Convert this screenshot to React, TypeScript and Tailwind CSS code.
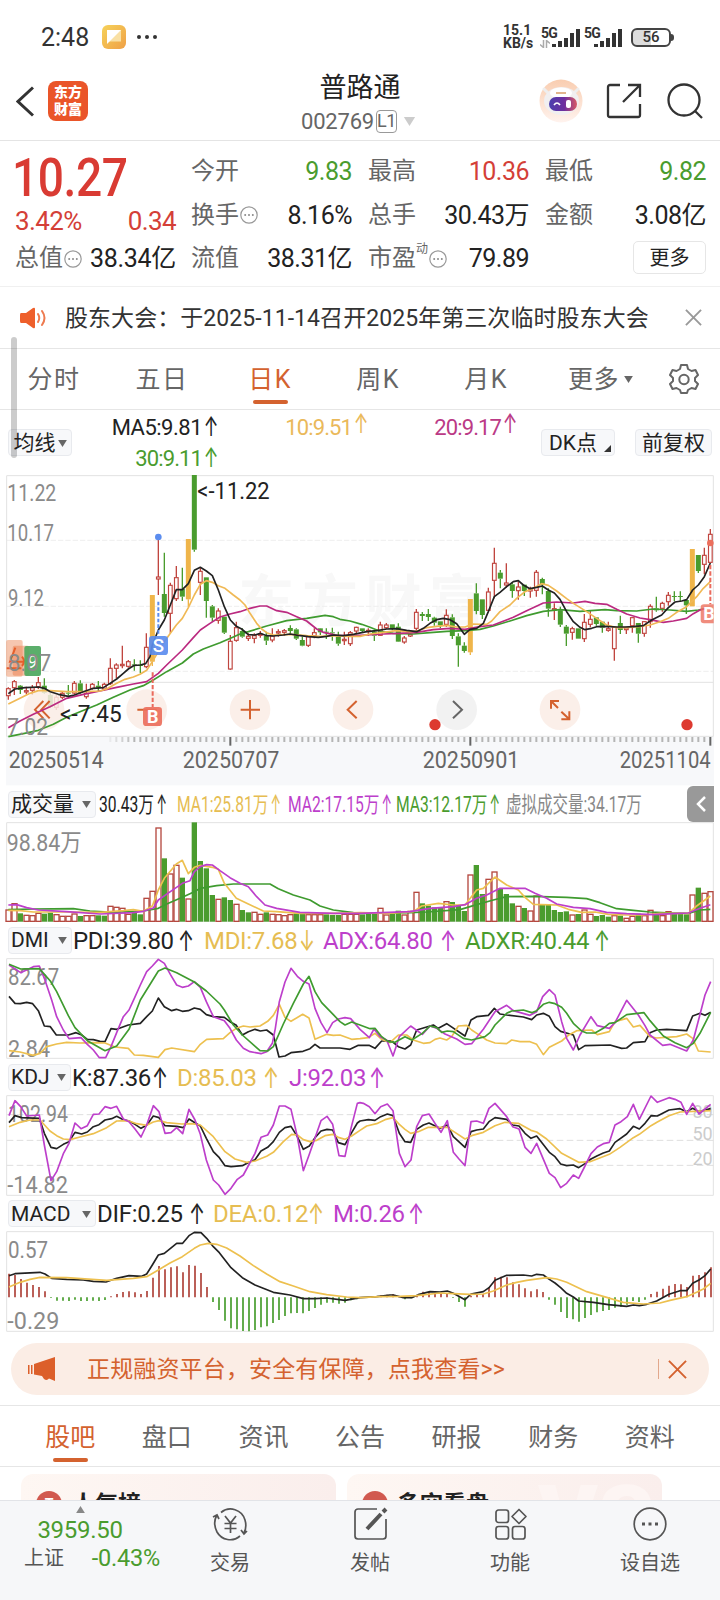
import React from 'react';
import clsx from 'clsx';

const RED = '#c0453f';
const GREEN = '#4a9c2e';
const YELLOW = '#efb54a';

// Charts are drawn on a grid of 3 units per pixel, one trading day every 18 units
const dayX = (i: number) => 25 + i * 18;

// Candles: kind, high, body top, body bottom, low
type Candle = [string, number, number, number, number];
const candles: Candle[] = [
    ['r', 667, 671, 692, 704], ['r', 645, 650, 668, 690], ['g', 660, 662, 675, 687], ['r', 665, 677, 681, 688],
    ['r', 660, 668, 676, 690], ['r', 636, 653, 665, 672], ['g', 640, 662, 684, 686], ['g', 684, 690, 726, 728],
    ['r', 690, 697, 727, 735], ['r', 680, 685, 697, 702], ['g', 660, 683, 686, 692], ['r', 648, 655, 684, 688],
    ['g', 646, 655, 684, 686], ['r', 656, 685, 695, 701], ['r', 654, 658, 670, 674], ['g', 648, 662, 668, 678],
    ['r', 653, 658, 672, 678], ['r', 580, 610, 656, 660], ['r', 595, 600, 610, 640], ['r', 542, 598, 602, 610],
    ['r', 585, 590, 604, 608], ['g', 583, 598, 601, 617], ['g', 586, 599, 603, 625], ['r', 505, 547, 605, 610],
    ['y', 390, 390, 590, 603], ['r', 216, 336, 342, 390], ['g', 263, 387, 444, 455], ['r', 353, 361, 445, 505],
    ['r', 303, 338, 401, 408], ['g', 308, 372, 395, 408], ['y', 222, 222, 403, 425], ['g', 30, 30, 254, 260],
    ['r', 308, 319, 352, 390], ['g', 337, 337, 408, 458], ['g', 420, 424, 458, 470], ['r', 430, 438, 466, 476],
    ['g', 455, 455, 503, 507], ['r', 510, 529, 612, 614], ['r', 470, 488, 526, 530], ['g', 490, 498, 515, 518],
    ['r', 505, 514, 520, 528], ['r', 505, 512, 520, 535], ['r', 498, 508, 511, 518], ['g', 500, 513, 527, 540],
    ['r', 490, 513, 525, 532], ['r', 493, 500, 504, 515], ['r', 492, 497, 502, 512], ['g', 481, 489, 498, 506],
    ['g', 490, 493, 521, 525], ['g', 515, 525, 542, 544], ['r', 512, 515, 541, 546], ['r', 490, 503, 512, 520],
    ['g', 489, 490, 502, 510], ['g', 490, 500, 503, 522], ['g', 488, 502, 505, 527], ['g', 500, 514, 536, 542],
    ['r', 500, 523, 527, 540], ['r', 498, 503, 536, 543], ['r', 485, 487, 498, 508], ['g', 490, 490, 498, 503],
    ['r', 490, 496, 500, 512], ['g', 495, 500, 512, 528], ['r', 470, 480, 511, 513], ['r', 474, 480, 488, 492],
    ['g', 478, 478, 492, 496], ['g', 475, 485, 530, 531], ['r', 513, 519, 531, 536], ['r', 495, 508, 513, 516],
    ['r', 432, 442, 490, 505], ['g', 441, 447, 453, 468], ['g', 432, 447, 456, 468], ['g', 455, 458, 473, 482],
    ['g', 469, 469, 481, 490], ['r', 433, 451, 478, 486], ['g', 448, 457, 513, 522], ['g', 505, 514, 541, 605],
    ['g', 532, 542, 558, 563], ['y', 402, 402, 562, 570], ['g', 355, 385, 438, 448], ['g', 403, 403, 450, 462],
    ['r', 368, 381, 436, 438], ['r', 248, 295, 346, 400], ['g', 315, 323, 341, 370], ['r', 295, 354, 360, 368],
    ['g', 352, 358, 378, 398], ['r', 350, 366, 377, 404], ['g', 359, 359, 378, 393], ['r', 365, 372, 378, 398],
    ['r', 315, 322, 376, 395], ['g', 338, 342, 360, 388], ['g', 370, 378, 431, 455], ['r', 415, 431, 435, 465],
    ['g', 425, 436, 479, 486], ['g', 480, 485, 506, 543], ['r', 485, 491, 502, 524], ['g', 490, 490, 521, 521],
    ['r', 447, 472, 521, 531], ['r', 435, 463, 478, 487], ['g', 457, 457, 477, 482], ['g', 470, 470, 488, 503],
    ['r', 470, 491, 496, 500], ['r', 484, 487, 551, 587], ['g', 452, 474, 495, 507], ['r', 488, 489, 494, 507],
    ['r', 456, 458, 482, 503], ['g', 474, 474, 506, 533], ['r', 468, 470, 505, 515], ['r', 418, 424, 470, 488],
    ['g', 395, 430, 436, 440], ['r', 410, 415, 430, 440], ['r', 381, 391, 410, 422], ['g', 379, 393, 396, 408],
    ['g', 379, 393, 396, 410], ['g', 403, 405, 421, 447], ['y', 252, 252, 424, 424], ['g', 270, 270, 318, 324],
    ['r', 248, 271, 298, 328], ['r', 192, 208, 292, 292],
];

const priceLines = [
    ['#3f9b2f', '25,815 70,806 115,796 160,778 200,757 240,740 290,720 340,697 390,675 430,662 460,645 500,620 547,594 580,567 610,552 660,533 700,516 720,507 745,500 800,483 860,467 920,460 975,451 1000,455 1020,463 1050,468 1085,478 1110,487 1140,499 1180,505 1240,507 1290,503 1340,499 1395,497 1440,493 1480,483 1530,468 1580,452 1630,439 1680,434 1740,439 1815,434 1850,437 1910,438 1960,432 2010,435 2060,439 2095,435 2131,428'],
    ['#bb2a80', '25,788 60,768 100,748 150,725 200,700 250,688 300,678 350,667 400,657 440,650 475,625 500,600 547,555 580,518 601,495 630,475 660,456 690,447 720,440 750,430 780,423 800,423 830,437 860,442 890,455 920,468 950,492 970,502 1010,511 1060,512 1100,510 1150,507 1200,505 1250,502 1300,494 1350,490 1395,493 1440,485 1480,480 1540,457 1580,437 1630,414 1670,411 1720,414 1755,409 1785,415 1820,418 1850,433 1880,447 1920,459 1950,464 1990,472 2020,468 2060,460 2080,446 2100,435 2131,428'],
    ['#f0b955', '25,717 60,700 90,685 115,677 150,677 200,680 250,680 300,678 320,672 350,655 375,643 400,636 420,628 440,616 457,590 475,560 493,530 511,505 529,480 547,460 565,428 583,390 601,358 619,347 637,352 655,362 675,370 700,390 720,405 735,420 750,445 770,475 785,492 800,503 820,510 870,508 920,512 960,514 1010,512 1040,514 1080,514 1110,507 1150,502 1190,497 1230,500 1250,498 1280,488 1310,484 1340,481 1370,486 1395,486 1420,477 1440,478 1460,478 1475,468 1500,440 1530,420 1550,400 1575,380 1600,370 1625,356 1645,361 1670,378 1700,401 1720,415 1760,440 1790,460 1820,480 1850,488 1880,488 1920,484 1950,480 1980,470 2005,460 2030,442 2060,425 2090,395 2110,370 2131,350'],
    ['#222', '25,686 45,672 75,668 115,666 133,670 151,680 175,688 205,694 223,690 250,680 280,670 310,668 330,655 350,642 370,625 385,612 403,601 421,600 437,596 450,575 457,540 475,495 493,465 511,420 529,374 547,374 565,356 583,316 601,307 619,318 637,332 655,375 673,425 691,465 709,484 725,492 745,509 765,510 781,505 800,512 820,513 850,510 870,507 895,511 925,515 955,517 980,514 1000,510 1030,512 1060,508 1100,500 1130,497 1160,492 1190,491 1220,496 1250,500 1270,490 1290,475 1310,464 1330,460 1350,464 1370,476 1380,490 1393,508 1410,493 1430,490 1450,475 1465,440 1483,395 1500,382 1520,365 1540,350 1555,347 1570,360 1590,371 1610,367 1627,363 1645,375 1663,384 1680,403 1700,440 1720,470 1740,487 1755,494 1775,490 1790,485 1815,484 1850,486 1875,486 1900,485 1930,482 1955,465 1985,450 2005,428 2025,411 2045,408 2060,404 2078,375 2095,360 2113,335 2131,294'],
];

const volumes =
    'r388 r369 g400 r404 r405 r398 g401 g398 r402 r407 r407 r400 g408 r405 r405 g406 g407 r377 r380 r383 r401 g398 g403 r353 r332 r142 g235 r280 r254 g293 r355 g127 g243 g265 g345 r356 g352 g360 r371 g390 g397 r395 r401 g397 r401 r402 r405 r402 g400 g398 r402 r402 r402 g403 g405 g405 r401 r401 r401 g403 g402 g402 r383 r403 g402 g392 r403 r392 r335 g370 g377 g382 g381 r363 g366 g375 g393 r283 g255 g342 r296 r274 g327 g342 g370 r377 g384 r391 r346 g375 g374 g390 g396 g394 r403 g402 r388 r401 g408 g405 g410 r405 g407 r413 r407 g401 r405 r389 g403 r405 r393 g400 g402 g403 r343 g323 r338 r333'.split(' ');

const volumeLines = [
    ['#3f9b2f', '25,389 100,387 220,386 270,393 340,397 430,393 475,385 500,372 547,352 583,335 601,325 650,317 700,312 810,312 835,326 880,345 930,360 960,378 1000,390 1060,398 1160,399 1230,398 1280,396 1380,389 1430,374 1480,360 1520,350 1600,349 1700,352 1760,356 1800,368 1850,386 1900,391 1950,396 2020,399 2065,400 2100,390 2131,388'],
    ['#edc04f', '25,391 60,392 100,396 200,396 300,397 340,394 370,392 400,389 430,394 457,378 475,330 493,295 529,252 547,241 565,281 583,262 601,256 637,262 655,268 673,310 709,355 745,372 790,393 830,395 900,400 1000,400 1080,398 1160,400 1240,395 1265,378 1315,370 1360,375 1395,375 1430,330 1450,325 1485,291 1520,315 1555,330 1575,352 1600,373 1670,375 1705,388 1745,397 1785,396 1825,403 1880,405 1930,405 1980,400 2030,400 2065,400 2090,378 2131,348'],
    ['#bd3fcb', '25,375 50,374 80,383 115,390 200,395 300,402 400,398 430,394 460,384 475,360 511,335 547,310 570,302 583,275 601,260 620,254 637,255 660,272 690,293 720,310 745,320 770,350 795,375 830,385 900,397 1000,400 1080,400 1230,395 1290,385 1360,380 1395,374 1430,355 1460,345 1500,325 1575,325 1605,340 1640,355 1670,372 1720,382 1770,386 1820,397 1880,401 1960,404 2020,401 2065,399 2100,385 2131,374'],
];

// The right half of a series is stored relative to the middle of the chart
const join = (left: string, right: string) =>
    left + ' ' + right.split(' ').map((p) => {
        const [x, y] = p.split(',').map(Number);
        return `${x + 1080},${y}`;
    }).join(' ');

const dmiLines = [
    ['#222', join(
        '27,649 45,670 61,671 80,667 98,671 115,692 133,738 151,740 169,765 205,765 228,758 245,765 262,778 280,779 300,784 315,785 333,746 350,748 385,735 421,730 440,710 457,693 475,654 493,680 515,692 529,688 547,694 565,692 583,684 601,688 619,704 640,710 673,712 690,725 709,736 727,765 745,755 765,748 781,753 800,750 820,765 837,831 855,828 873,818 909,814 930,806 945,793 960,804 1020,804 1050,808 1075,796',
        '0,796 27,796 45,805 65,783 95,783 115,800 135,807 152,795 170,750 220,735 235,745 260,731 315,768 333,720 350,710 385,706 403,685 420,702 440,705 490,711 515,719 530,705 550,700 568,709 585,740 602,754 640,765 656,809 675,797 750,795 785,805 800,804 820,788 855,785 870,758 890,750 920,748 980,752 998,708 1020,700 1035,706 1052,697')],
    ['#edc04f', join(
        '27,812 60,816 100,826 120,820 140,800 170,792 200,787 240,789 280,788 315,789 345,801 385,805 403,825 430,826 475,832 495,809 515,804 583,815 601,793 620,778 670,776 690,758 709,745 730,738 750,741 780,738 803,724 820,706 838,673 855,712 873,724 908,703 927,714 945,778 980,763 1000,766 1020,765 1055,778',
        '0,776 25,773 45,760 65,778 90,788 115,765 140,765 160,780 190,790 210,788 225,778 240,774 260,780 275,770 295,738 320,736 335,750 355,763 380,780 405,789 440,791 455,780 480,785 510,785 530,793 550,824 568,802 605,783 625,766 650,752 695,750 712,764 748,755 765,725 800,715 820,741 840,736 870,770 890,774 950,770 980,762 998,775 1015,813 1052,816')],
    ['#bd3fcb', join(
        '27,555 62,578 100,560 118,558 133,595 155,660 170,710 190,750 207,776 243,773 262,793 280,810 298,833 317,833 333,800 350,758 370,710 387,690 403,655 421,615 440,575 457,558 475,538 493,550 511,583 530,615 547,622 565,618 583,605 601,622 619,665 640,710 673,722 690,745 709,780 730,805 750,815 783,821 800,815 817,790 826,745 838,665 855,606 873,565 892,589 910,604 927,612 945,685 963,728 981,758 998,728 1015,717 1035,713 1052,716',
        '0,748 28,773 42,747 60,770 80,780 99,828 118,770 152,738 187,763 210,738 230,745 255,762 290,777 315,793 335,791 370,748 405,695 440,676 460,692 510,706 530,695 548,650 568,629 585,645 605,725 620,775 640,810 660,765 693,710 712,737 748,745 765,728 800,661 835,705 855,737 870,765 908,796 930,793 980,813 1000,780 1017,715 1035,645 1052,605')],
    ['#3f9b2f', join(
        '27,553 62,567 118,566 151,603 170,635 205,707 225,743 262,782 315,812 350,798 387,748 421,660 475,573 495,564 530,578 583,606 619,633 660,672 673,690 700,735 727,765 780,812 803,813 820,800 850,732 880,670 910,612 927,589 945,635 965,668 1000,704 1020,725 1035,735 1055,726',
        '0,735 30,746 45,745 65,770 85,785 105,787 135,770 155,780 187,760 210,738 230,743 245,757 262,753 280,755 310,775 335,780 375,770 390,758 405,735 440,700 455,693 490,690 515,698 530,692 550,673 568,667 585,671 605,682 620,700 640,730 665,753 680,759 705,759 730,745 748,730 765,728 800,704 852,698 870,722 890,745 910,768 945,788 980,803 1000,790 1020,760 1052,697')],
];

const kdjLines = [
    ['#222', join(
        '27,173 45,152 65,158 118,160 133,205 153,247 170,251 190,238 207,230 225,202 245,207 262,201 280,185 297,179 315,165 335,161 350,154 370,164 387,168 405,178 423,190 440,181 460,153 477,158 495,182 530,184 550,188 567,162 585,173 601,183 619,220 640,260 658,278 675,302 693,305 727,302 750,290 765,284 783,258 803,247 820,230 838,202 855,188 873,184 892,215 910,253 928,243 945,218 963,198 981,193 998,195 1015,233 1035,239 1055,203 1072,174',
        '0,168 25,164 45,166 62,155 82,147 99,152 118,205 135,230 152,232 170,193 190,180 207,174 240,190 262,180 280,215 315,247 333,200 350,195 370,192 387,170 405,158 440,163 458,180 477,183 495,205 513,220 530,213 568,262 585,275 602,297 620,302 640,300 656,308 675,296 693,282 712,272 730,264 748,258 765,232 800,207 820,184 838,192 855,175 873,152 892,153 927,135 960,131 980,140 998,130 1017,140 1052,131')],
    ['#edc04f', join(
        '27,185 60,172 90,165 120,165 150,198 170,212 190,222 210,224 240,216 280,206 320,188 350,168 385,167 410,176 440,181 460,171 477,167 500,173 545,177 575,176 601,180 640,215 675,260 705,282 740,292 765,288 800,274 820,262 850,230 875,208 892,210 910,224 930,230 950,226 975,212 998,208 1015,217 1035,223 1055,213',
        '0,196 20,183 50,176 75,164 99,158 118,178 135,193 152,205 175,200 205,187 240,187 262,187 285,202 315,222 335,212 370,202 405,182 435,172 475,175 513,196 530,201 560,222 605,265 656,292 690,290 748,268 780,247 820,218 838,208 873,182 892,171 927,152 960,141 1052,137')],
    ['#bd3fcb', join(
        '27,152 45,107 62,125 80,153 118,150 133,240 153,347 170,320 190,266 207,235 225,174 243,191 262,182 280,148 297,147 315,125 333,130 350,124 370,162 387,170 405,192 423,216 440,180 460,122 477,140 495,205 513,203 530,188 548,206 567,133 585,165 601,208 619,285 640,345 656,360 675,388 693,370 712,343 730,330 765,265 783,217 803,210 820,180 838,123 855,123 873,133 892,215 910,317 928,268 963,167 981,154 998,178 1017,272 1035,274 1053,190 1072,115',
        '0,113 10,115 28,125 45,146 62,125 82,117 99,137 118,265 135,305 153,285 170,185 187,152 207,147 225,175 243,202 262,167 280,262 297,282 315,302 333,170 350,168 370,175 387,130 405,115 440,155 458,185 477,192 495,247 513,265 530,235 568,325 585,338 602,368 620,355 640,330 656,340 675,303 693,266 712,246 730,236 748,232 765,180 783,170 802,155 820,118 838,163 873,93 892,112 927,98 945,103 963,112 980,148 998,115 1017,147 1052,118')],
];

const macdLines = [
    ['#222', join(
        '27,632 45,626 120,622 135,627 155,640 200,643 250,645 280,649 318,651 350,640 387,632 425,634 440,627 457,600 475,570 493,565 530,535 548,535 567,512 583,502 603,503 620,520 640,545 658,563 693,608 727,638 765,660 820,682 870,690 910,701 945,701 980,699 1035,706',
        '0,698 50,695 90,690 100,690 130,698 155,698 175,689 210,680 240,681 262,678 280,685 315,704 333,687 370,680 387,668 405,646 440,631 490,630 515,633 530,628 550,630 568,643 585,654 602,668 620,685 640,696 656,708 700,712 745,719 800,724 820,720 838,722 860,718 890,708 927,688 960,677 980,677 998,655 1017,645 1035,632 1052,612')],
    ['#edc04f', join(
        '27,666 60,652 90,643 120,637 200,638 320,646 400,640 440,635 475,615 510,594 547,575 583,550 601,540 625,535 650,538 680,549 720,573 760,602 800,627 840,650 880,663 930,680 980,689 1040,696',
        '0,698 60,695 120,694 170,692 240,684 280,686 330,688 370,687 400,678 440,660 470,652 500,646 560,638 590,642 620,652 680,680 740,697 790,712 850,717 900,714 930,706 980,695 1010,682 1030,672 1052,655')],
];

const macdBars = [
    626, 630, 642, 653, 660, 666, 679, 699, 707, 707, 708, 704, 708, 708, 707, 708, 705, 694, 687, 681, 679, 682, 687, 678,
    638, 603, 613, 607, 604, 622, 600, 602, 624, 666, 711, 735, 767, 790, 793, 798, 799, 795, 787, 784, 774, 765, 753, 745,
    744, 745, 738, 729, 719, 713, 713, 716, 713, 706, 703, 699, 695, 695, 691, 689, 688, 695, 703, 700, 690, 680, 681, 683,
    687, 685, 699, 711, 725, 692, 686, 687, 668, 637, 635, 637, 652, 658, 670, 679, 673, 681, 704, 719, 741, 759, 763, 770,
    759, 750, 742, 738, 735, 728, 725, 719, 708, 711, 704, 687, 680, 671, 662, 657, 658, 666, 632, 630, 622, 607,
];

const Lines: React.FC<{ lines: string[][] }> = ({ lines }) => (
    <g fill="none" strokeWidth="5" strokeLinejoin="round">
        {lines.map(([color, points]) => <polyline key={color} points={points} stroke={color} />)}
    </g>
);

const AxisText: React.FC<{ x: number; y: number; w: number; fill?: string; children: React.ReactNode }> = ({ x, y, w, fill = '#8a8a8a', children }) => (
    <text x={x} y={y} textLength={w} lengthAdjust="spacingAndGlyphs" fontSize="70" fill={fill}>{children}</text>
);

const Arrow: React.FC<{ down?: boolean }> = ({ down }) => (
    <span className="inline-flex w-[13px] shrink-0 justify-center font-['Inter'] tracking-normal">
        <span className="scale-x-[0.8] scale-y-[1.2]">{down ? '↓' : '↑'}</span>
    </span>
);

const Caret: React.FC<{ className?: string }> = ({ className }) => (
    <svg viewBox="0 0 10 8" className={clsx('h-[7px] w-[9px] fill-[#666]', className)}><path d="M0 0h10L5 8z" /></svg>
);

const MoreDots: React.FC = () => (
    <svg viewBox="0 0 18 18" className="ml-px h-[18px] w-[18px] shrink-0">
        <circle cx="9" cy="9" r="8.2" fill="none" stroke="#999" strokeWidth="1.2" />
        <circle cx="5.2" cy="9" r="1" fill="#888" /><circle cx="9" cy="9" r="1" fill="#888" /><circle cx="12.8" cy="9" r="1" fill="#888" />
    </svg>
);

const StatusBar: React.FC = () => (
    <div className="flex h-[62px] items-center pt-3 pl-[41px] text-[#333]">
        <span className="w-[61px] text-[25px] leading-none">2:48</span>
        <svg viewBox="0 0 24 24" className="h-6 w-6">
            <defs>
                <linearGradient id="note" x1="0" y1="0" x2="1" y2="1"><stop stopColor="#f6d25a" /><stop offset="1" stopColor="#efa046" /></linearGradient>
            </defs>
            <rect width="24" height="24" rx="6" fill="url(#note)" />
            <path d="M5 16.500V5h14v11.500z" fill="#f9e0a4" /><path d="M5 5h14L5 19z" fill="#fff" />
        </svg>
        <svg viewBox="0 0 22 6" className="ml-2.5 h-1.5 w-[22px] fill-[#333]"><circle cx="3" cy="3" r="2" /><circle cx="11" cy="3" r="2" /><circle cx="19" cy="3" r="2" /></svg>
        <div className="ml-[345px] w-[38px] text-[14px] leading-[13px] font-bold">
            <div>15.1</div>
            <div>KB/s</div>
        </div>
        <div className="relative flex h-[21px] w-[43px]">
            <span className="w-[11px] text-[14px] leading-[12px] font-bold tracking-[-0.8px]">5G</span>
            <svg viewBox="0 0 28 20" className="mt-px h-5 w-7 shrink-0 fill-[#333]">
                <path d="M0 16h4v3H0zM6 13h4v6H6zM12 10h4v9h-4zM18 5h4v14h-4zM24 1h4v18h-4z" />
            </svg>
            {/* Data traffic arrows */}
            <svg viewBox="0 0 10 8" className="absolute bottom-0 -left-px h-2 w-2.5" fill="none" stroke="#aaa" strokeWidth="1.500"><path d="M3.500 0v7.500L0 4.500M6.500 8V.5L10 3.500" /></svg>
        </div>
        <div className="flex h-[21px] w-[40px]">
            <span className="w-[10px] text-[14px] leading-[12px] font-bold tracking-[-0.8px]">5G</span>
            <svg viewBox="0 0 28 20" className="mt-px h-5 w-7 shrink-0 fill-[#333]">
                <path d="M0 16h4v3H0zM6 13h4v6H6zM12 10h4v9h-4zM18 5h4v14h-4zM24 1h4v18h-4z" />
            </svg>
        </div>
        <div className="relative ml-[7px] flex h-[19px] w-10 items-center justify-center rounded-[6px] border-2 border-[#444] bg-linear-to-r from-[#ddd] from-50% to-white to-50% text-[15px] leading-none font-medium">
            56
            <span className="absolute top-1 -right-[5px] h-[7px] w-[3px] rounded-r bg-[#444]" />
        </div>
    </div>
);

const Header: React.FC = () => (
    <div className="flex h-[79px] items-center border-b border-[#e4e4e4] pl-4">
        <svg viewBox="0 0 18 30" className="h-[31px] w-[18px]" fill="none" stroke="#333" strokeWidth="3"><path d="M17 1 2 15l15 14" /></svg>
        <div className="ml-[14px] flex h-10 w-10 flex-col items-center justify-center rounded-lg bg-[#ea5529] text-[14px] leading-[17px] font-black text-white">
            <span>东方</span>
            <span>财富</span>
        </div>
        <div className="ml-[205px] flex w-[134px] flex-col items-center pt-[6px]">
            <h1 className="text-[27px] leading-[34px] text-[#222]">普路通</h1>
            <div className="flex h-[32px] w-full items-center pl-[8px] text-[22px] text-[#666]">
                <span className="w-[74px] tracking-[-0.2px]">002769</span>
                <span className="ml-px flex h-[23px] w-[21px] items-center justify-center rounded-[4px] border border-[#999] text-[18px] leading-none tracking-[-0.5px]">L1</span>
                <Caret className="ml-[6px] h-[9px] w-[13px] fill-[#ccc]" />
            </div>
        </div>
        <svg viewBox="0 0 44 44" className="ml-[112px] h-11 w-11">
            <defs>
                <linearGradient id="face" x1="0" x2="1"><stop stopColor="#4b3fae" /><stop offset=".55" stopColor="#6f2f9e" /><stop offset="1" stopColor="#d95a62" /></linearGradient>
                <linearGradient id="halo" x1="0" x2="0" y1="0" y2="1"><stop stopColor="#f9cdb0" /><stop offset="1" stopColor="#fff3ee" /></linearGradient>
            </defs>
            <circle cx="22" cy="22" r="21.500" fill="url(#halo)" />
            <path d="M5 10l5 5M39 10l-5 5" stroke="#eee" strokeWidth="3" strokeLinecap="round" />
            <ellipse cx="22.500" cy="22" rx="17.500" ry="14" fill="#f1eff0" />
            <ellipse cx="22" cy="14" rx="11" ry="5.500" fill="#fff" />
            <path d="M17 14h10" stroke="#e2b58d" strokeWidth="2" />
            <rect x="10" y="18" width="28" height="14" rx="7" fill="url(#face)" />
            <path d="M15 26q3-4 6 0" fill="none" stroke="#fff" strokeWidth="1.600" />
            <rect x="27" y="21" width="5" height="8" rx="2" fill="#fff" />
        </svg>
        <svg viewBox="0 0 36 36" className="ml-[23px] h-9 w-9" fill="none" stroke="#333" strokeWidth="2.300">
            <path d="M14 2H4a2 2 0 0 0-2 2v28a2 2 0 0 0 2 2h28a2 2 0 0 0 2-2V21M22 2h12v12M34 2 17 19" />
        </svg>
        <svg viewBox="0 0 36 36" className="ml-[25px] h-9 w-9" fill="none" stroke="#333" strokeWidth="2.300">
            <circle cx="17" cy="17" r="15.500" /><path d="m28 28 7 7" />
        </svg>
    </div>
);

const quoteRows = [
    [{ label: '今开', value: '9.83', color: 'text-[#4a9c2e]' }, { label: '最高', value: '10.36', color: 'text-[#d43f38]' }, { label: '最低', value: '9.82', color: 'text-[#4a9c2e]' }],
    [{ label: '换手', value: '8.16%', dots: true }, { label: '总手', value: '30.43万' }, { label: '金额', value: '3.08亿' }],
    [{ label: '流值', value: '38.31亿' }, { label: '市盈', value: '79.89', dots: true, sup: '动' }],
];

const Quote: React.FC = () => (
    <div className="flex h-[146px] gap-[15px] border-b border-[#f0f0f0] pt-[9px] pl-[15px] text-[25px] leading-[43px] text-[#222]">
        <div className="w-[161px]">
            <div className="-ml-[3px] h-[50px] w-fit origin-left scale-x-[0.87] pt-[3px] text-[53px] leading-[50px] font-medium tracking-[-0.5px] text-[#d93b33]">10.27</div>
            <div className="flex h-[36px] items-end justify-between text-[26px] leading-[30px] tracking-[-0.6px] text-[#d43f38]"><span>3.42%</span><span>0.34</span></div>
            <div className="flex h-[45px] items-center justify-between text-[25px] tracking-[-0.3px]">
                <span className="flex items-center text-[24px] tracking-normal text-[#666]">总值<MoreDots /></span>
                <span>38.34亿</span>
            </div>
        </div>
        <div className="flex flex-col">
            {quoteRows.map((row, i) => (
                <div key={i} className="flex h-[43.5px] gap-[16px]">
                    {row.map((cell: any) => (
                        <div key={cell.label} className="flex w-[161px] items-center justify-between tracking-[-0.5px]">
                            <span className="flex items-center text-[24px] tracking-normal text-[#666]">
                                {cell.label}
                                {cell.sup && <span className="-mt-5 text-[12px] leading-none">{cell.sup}</span>}
                                {cell.dots && <MoreDots />}
                            </span>
                            <span className={cell.color}>{cell.value}</span>
                        </div>
                    ))}
                    {i === 2 && (
                        <button className="mt-1 ml-[72px] h-[33px] w-[73px] translate-x-4 rounded-[5px] border border-[#e6e6e6] text-[20px] leading-none">更多</button>
                    )}
                </div>
            ))}
        </div>
    </div>
);

const Notice: React.FC = () => (
    <div className="flex h-[62px] items-center border-b border-[#e6e6e6] pl-5 text-[23px] text-[#333]">
        <svg viewBox="0 0 26 22" className="h-[22px] w-[26px]">
            <path d="M1 6h5l7-5q2-1 2 1v18q0 2-2 1l-7-5H1q-1 0-1-2V8q0-2 1-2z" fill="#ee5f2b" />
            <path d="M18 7q2.500 4 0 8M22 4q5 7 0 14" fill="none" stroke="#ee7a4f" strokeWidth="2" strokeLinecap="round" />
        </svg>
        <span className="ml-[19px] w-[600px] pt-[3px] tracking-[0.06px] whitespace-nowrap">股东大会：于2025-11-14召开2025年第三次临时股东大会</span>
        <svg viewBox="0 0 18 18" className="ml-5 h-[17px] w-[17px]" fill="none" stroke="#999" strokeWidth="2"><path d="m1 1 16 16M17 1 1 17" /></svg>
    </div>
);

const PeriodTabs: React.FC = () => (
    <div className="flex h-[61px] items-center border-b border-[#e6e6e6] text-[25px] text-[#666]">
        {['分时', '五日', '日K', '周K', '月K'].map((tab) => (
            <div key={tab} className={clsx('flex h-full w-[108px] flex-col items-center pt-[10px]', tab === '日K' && 'text-[#d4622f]')}>
                <span className="leading-[41px] tracking-[1.500px]">{tab}</span>
                {tab === '日K' && <span className="h-1 w-[35px] rounded-full bg-[#d4622f]" />}
            </div>
        ))}
        <span className="ml-7 w-[52px] pt-[2px] leading-[38px] tracking-[0.5px]">更多</span>
        <Caret className="ml-1" />
        <svg viewBox="0 0 30 30" className="ml-9 h-[30px] w-[30px]" fill="none" stroke="#666" strokeWidth="2" strokeLinejoin="round">
            <path d="M12 1h6l1 4 3.500 2 4-1 2.500 5-3 3v3l3 3-2.500 5-4-1-3.500 2-1 3h-6l-1-3-3.500-2-4 1L1 20l3-3v-3l-3-3 2.500-5 4 1L11 5z" />
            <circle cx="15" cy="15.500" r="4.700" />
        </svg>
    </div>
);

const chip = 'flex h-[27px] items-center rounded-[4px] border border-[#e8eaee] bg-[#f7f8fa] pt-px text-[21px] leading-none text-[#222]';

const MaRow: React.FC = () => (
    <div className="flex h-[65px] items-center pl-2 text-[22px]">
        <div className={clsx(chip, 'w-16 justify-center text-[20px]')}>均线<Caret className="ml-0.5" /></div>
        <div className="h-full w-[146px] pt-[2px] leading-[31px]">
            <div className="flex justify-end gap-[3px] tracking-[-0.5px] text-[#222]">MA5:9.81<Arrow /></div>
            <div className="flex justify-end gap-[3px] tracking-[-0.9px] text-[#4a9c2e]">30:9.11<Arrow /></div>
        </div>
        <div className="flex h-full w-[150px] justify-end gap-[3px] pt-[2px] leading-[31px] tracking-[-0.9px] text-[#eab95a]">10:9.51<Arrow /></div>
        <div className="flex h-full w-[149px] justify-end gap-[3px] pt-[2px] leading-[31px] tracking-[-0.9px] text-[#bb3a86]">20:9.17<Arrow /></div>
        <div className={clsx(chip, 'relative ml-6 w-[74px] pl-[7px]')}>
            DK点
            <svg viewBox="0 0 7 7" className="absolute right-[3px] bottom-[3px] h-[7px] w-[7px] fill-[#333]"><path d="M7 0v7H0z" /></svg>
        </div>
        <div className={clsx(chip, 'ml-5 w-[77px] justify-center text-[20.500px]')}>前复权</div>
    </div>
);

const Frame: React.FC<{ top: number; bottom: number }> = ({ top, bottom }) => (
    <path d={`M20 ${top + 2}H2140V${bottom - 2}H20z`} fill="none" stroke="#e2e2e2" strokeWidth="3" />
);

const PriceChart: React.FC = () => (
    <svg viewBox="0 30 2160 933" className="block h-[311px] w-[720px]">
        <rect x="18" y="813" width="2124" height="148" fill="#f7f8fa" />
        <text x="715" y="467" textLength="740" fontSize="168" fontWeight="700" fill="#f8f8f8">东方财富</text>
        <path d="M20 226H2140M20 424H2140M20 619H2140" stroke="#eee" strokeWidth="3" strokeDasharray="16 6" />
        <path d="M20 652H2140" stroke="#e2e2e2" strokeWidth="3" />
        <Frame top={30} bottom={816} />

        {/* Candlesticks */}
        {candles.map(([kind, high, top, bottom, low], i) => {
            const color = kind === 'r' ? RED : kind === 'g' ? GREEN : YELLOW;
            return (
                <g key={i} stroke={color} strokeWidth="4">
                    <path d={`M${dayX(i)} ${high}V${top}M${dayX(i)} ${bottom}V${low}`} />
                    {kind === 'r'
                        ? <rect x={dayX(i) - 5.5} y={top} width="11" height={bottom - top} fill="#fff" strokeWidth="3.5" />
                        : <rect x={dayX(i) - 7.5} y={top} width="15" height={bottom - top} fill={color} stroke="none" />}
                </g>
            );
        })}

        {/* Toolbar */}
        <g fill="#faece5" fillOpacity="0.85">
            <circle cx="132" cy="734" r="61" /><circle cx="440" cy="734" r="61" /><circle cx="750" cy="734" r="61" />
            <circle cx="1059" cy="734" r="61" /><circle cx="1370" cy="734" r="61" fill="#f0f0f0" /><circle cx="1680" cy="734" r="61" />
        </g>
        <g fill="none" stroke="#d4622f" strokeWidth="6">
            <path d="M130 708l-25 26 25 26M149 708l-25 26 25 26M412 734h58M722 734h58M750 705v58M1070 708l-27 26 27 26" />
            <path d="M1359 708l27 26-27 26" stroke="#666" />
            <path d="M1653 731v-23h24M1653 708l21 21M1708 739v24h-24M1708 763l-24-23" />
        </g>
        <circle cx="1305" cy="779" r="17" fill="#dd3a30" />
        <circle cx="2061" cy="779" r="17" fill="#dd3a30" />

        <Lines lines={priceLines} />

        {/* Overlapping event badges at the left edge */}
        <rect x="18" y="525" width="50" height="110" rx="6" fill="#f0a27c" fillOpacity=".6" />
        <rect x="38" y="542" width="50" height="90" rx="6" fill="#ec7f4e" fillOpacity=".5" />
        <path d="M46 548L30 590H70M20 610h44M66 575q12 14 0 28" fill="none" stroke="#e65f2b" strokeWidth="6" />
        <rect x="73" y="543" width="50" height="90" rx="6" fill="#4fa860" fillOpacity=".93" />
        <text x="82" y="608" fontSize="56" fill="#fff" fontStyle="italic">9</text>

        {/* Trade marks */}
        <path d="M475 410V512" stroke="#5b8def" strokeWidth="6" strokeDasharray="11 6" />
        <circle cx="475" cy="216" r="10" fill="#5b8def" />
        <rect x="447" y="513" width="57" height="57" rx="10" fill="#5b8def" fillOpacity=".92" />
        <text x="475" y="562" textAnchor="middle" fontSize="56" fontWeight="500" fill="#fff">S</text>
        <path d="M458 622V726M2131 300V418" stroke="#ea6a5c" strokeWidth="6" strokeDasharray="13 6" />
        <rect x="429" y="726" width="57" height="57" rx="10" fill="#ec6f5c" fillOpacity=".92" />
        <text x="458" y="775" textAnchor="middle" fontSize="54" fontWeight="700" fill="#fff">B</text>
        <circle cx="2131" cy="234" r="10" fill="#ec6f5c" />
        <path d="M2141 418h-29q-10 0-10 10v37q0 10 10 10h29z" fill="#ec6f5c" fillOpacity=".8" />
        <text x="2110" y="466" fontSize="54" fontWeight="700" fill="#fff" clipPath="url(#edge)">B</text>
        <clipPath id="edge"><rect x="2100" y="410" width="41" height="70" /></clipPath>

        <AxisText x={22} y={107} w={147}>11.22</AxisText>
        <AxisText x={22} y={227} w={140}>10.17</AxisText>
        <AxisText x={24} y={424} w={108}>9.12</AxisText>
        <AxisText x={24} y={619} w={130}>8.07</AxisText>
        <AxisText x={22} y={809} w={122}>7.02</AxisText>
        <AxisText x={592} y={102} w={217} fill="#222">&lt;-11.22</AxisText>
        <AxisText x={180} y={770} w={185} fill="#222">&lt;-7.45</AxisText>

        {/* Date axis */}
        {Array.from({ length: 101 }, (_, n) => n + 17).map((i) => (
            <path key={i} d={`M${dayX(i)} 816v${i === 37 || i === 77 || i === 117 ? 26 : 15}`} stroke={i === 37 || i === 77 || i === 117 ? '#666' : '#b5b5b5'} strokeWidth="6" strokeOpacity={Math.min(1, (i - 16) / 5)} />
        ))}
        <AxisText x={26} y={908} w={285} fill="#666">20250514</AxisText>
        <AxisText x={548} y={908} w={290} fill="#666">20250707</AxisText>
        <AxisText x={1268} y={908} w={290} fill="#666">20250901</AxisText>
        <AxisText x={1859} y={908} w={273} fill="#666">20251104</AxisText>
    </svg>
);

const volumeValues = [
    { text: '30.43万', color: 'text-[#222]', width: 'w-[78px]' },
    { text: 'MA1:25.81万', color: 'text-[#e6bd52]', width: 'w-[111px]' },
    { text: 'MA2:17.15万', color: 'text-[#bd3fcb]', width: 'w-[108px]' },
    { text: 'MA3:12.17万', color: 'text-[#4a9c2e]', width: 'w-[110px]' },
];

const VolumeHeader: React.FC = () => (
    <div className="relative flex h-9 items-center pl-2 text-[22px] whitespace-nowrap">
        <div className={clsx(chip, 'mr-[3px] w-[88px] pl-[2px] text-[20.500px]')}>成交量<Caret className="ml-auto mr-1" /></div>
        {volumeValues.map((v) => (
            <span key={v.text} className={clsx(v.color, v.width)}>
                <span className="flex w-fit origin-left scale-x-[0.71] gap-[4px]">{v.text}<Arrow /></span>
            </span>
        ))}
        <span className="w-[140px] text-[#888]"><span className="inline-block origin-left scale-x-[0.705]">虚拟成交量:34.17万</span></span>
        <div className="absolute top-0 right-[6px] flex h-9 w-[27px] items-center justify-center rounded-l-md bg-[#999]">
            <svg viewBox="0 0 10 16" className="h-4 w-2.5" fill="none" stroke="#fff" strokeWidth="2.500"><path d="M9 1 2 8l7 7" /></svg>
        </div>
    </div>
);

const VolumeChart: React.FC = () => (
    <svg viewBox="0 126 2160 300" className="block h-[100px] w-[720px]">
        <Frame top={126} bottom={426} />
        {volumes.map((v, i) => {
            const top = Number(v.slice(1));
            return v[0] === 'r'
                ? <rect key={i} x={dayX(i) - 7} y={top + 2} width="15" height={422 - top} fill="#fff" stroke="#b5483f" strokeWidth="4" />
                : <rect key={i} x={dayX(i) - 8} y={top} width="16" height={425 - top} fill={GREEN} />;
        })}
        <Lines lines={volumeLines} />
        <AxisText x={20} y={213} w={225}>98.84万</AxisText>
    </svg>
);

interface IndicatorProps {
    name: string;
    className?: string;
    chipClass: string;
    values: { text: string; color: string; width: string; down?: boolean }[];
}

const IndicatorHeader: React.FC<IndicatorProps> = ({ name, className = 'h-9', chipClass, values }) => (
    <div className={clsx('flex items-center pl-2 text-[24px]', className)}>
        <div className={clsx(chip, 'mr-[1px] pl-[2px]', chipClass)}>{name}<Caret className="ml-auto mr-1" /></div>
        {values.map((v) => (
            <span key={v.text} className={clsx('flex items-center justify-between pt-px tracking-[-0.3px] whitespace-nowrap', v.color, v.width)}>
                <span>{v.text}</span>
                <Arrow down={v.down} />
            </span>
        ))}
    </div>
);

const DmiChart: React.FC = () => (
    <svg viewBox="0 534 2160 303" className="block h-[101px] w-[720px]">
        <Frame top={534} bottom={837} />
        <AxisText x={24} y={615} w={154}>82.67</AxisText>
        <AxisText x={24} y={830} w={126}>2.84</AxisText>
        <Lines lines={dmiLines} />
    </svg>
);

const KdjChart: React.FC = () => (
    <svg viewBox="0 90 2160 303" className="block h-[101px] w-[720px]">
        <Frame top={90} bottom={393} />
        <path d="M20 149H2140M20 226H2140M20 301H2140" stroke="#dedede" strokeWidth="3" strokeDasharray="20 10" />
        <AxisText x={24} y={170} w={180}>102.94</AxisText>
        <AxisText x={22} y={384} w={182}>-14.82</AxisText>
        <g fontSize="54" fill="#ccc" textAnchor="end">
            <text x="2138" y="160">80</text><text x="2138" y="225">50</text><text x="2138" y="301">20</text>
        </g>
        <Lines lines={kdjLines} />
    </svg>
);

const MacdChart: React.FC = () => (
    <svg viewBox="0 498 2160 303" className="block h-[101px] w-[720px]">
        <Frame top={498} bottom={801} />
        {macdBars.map((y, i) => (
            <path key={i} d={`M${dayX(i) + 2} 697V${y}`} stroke={y < 697 ? '#b5524a' : '#56a53e'} strokeWidth="5.500" />
        ))}
        <AxisText x={24} y={579} w={120}>0.57</AxisText>
        <AxisText x={22} y={793} w={156}>-0.29</AxisText>
        <Lines lines={macdLines} />
    </svg>
);

const Banner: React.FC = () => (
    <div className="mx-[11px] mt-[11px] flex h-[52px] shrink-0 items-center rounded-full bg-[#fbede5] pl-[17px] text-[23px] text-[#d4622f]">
        <svg viewBox="0 0 27 24" className="h-6 w-[27px] fill-[#dc5f2a]"><path d="M0 8h1.500v9H0zM3 8h1.500v9H3zM6 7 27 0v24l-6-2.500q-2 2.500-5 .5l-2-3-8-1.500z" /></svg>
        <span className="ml-[32px] w-[571px] pt-0.5 tracking-[0.15px]">正规融资平台，安全有保障，点我查看&gt;&gt;</span>
        <span className="h-5 w-px bg-[#e2a88c]" />
        <svg viewBox="0 0 20 20" className="ml-[9px] h-[19px] w-[19px]" fill="none" stroke="#d4622f" strokeWidth="2"><path d="m1 1 18 18M19 1 1 19" /></svg>
    </div>
);

const SectionTabs: React.FC = () => (
    <div className="mt-[10px] flex h-[62px] shrink-0 border-y border-[#e6e6e6] px-[22px] text-[25px] text-[#666]">
        {['股吧', '盘口', '资讯', '公告', '研报', '财务', '资料'].map((tab, i) => (
            <div key={tab} className={clsx('flex w-[96.600px] flex-col items-center pt-[10px]', i === 0 && 'text-[#d4622f]')}>
                <span className="leading-[43px]">{tab}</span>
                {i === 0 && <span className="-mt-px h-1 w-[35px] shrink-0 rounded-full bg-[#d4622f]" />}
            </div>
        ))}
    </div>
);

const Cards: React.FC = () => (
    <div className="flex gap-[11px] overflow-hidden pt-[7px] pl-[21px] text-[23px] leading-[36px] font-bold text-[#222]">
        <div className="flex h-[60px] w-[315px] items-start rounded-xl bg-linear-to-r from-[#fef7f3] to-[#faeeec] pt-[13px] pl-[15px]">
            <span className="mt-[4px] flex h-[26px] w-[26px] items-center justify-center rounded-full bg-[#d1594f] text-[14px] leading-none text-white">T</span>
            <span className="ml-[10px]">人气榜</span>
            <span className="ml-2 font-normal text-[#999]">›</span>
        </div>
        <div className="relative flex h-[60px] w-[315px] items-start overflow-hidden rounded-xl bg-linear-to-r from-[#fef7f3] to-[#faeeec] pt-[13px] pl-[15px]">
            <span className="mt-[4px] flex h-[26px] w-[26px] items-center justify-center rounded-full bg-[#d1594f] text-[13px] leading-none text-white">VS</span>
            <span className="ml-[9px]">多空看盘</span>
            <span className="absolute top-4 right-2 text-[90px] leading-[60px] font-black text-[#fdf5f3]">VS</span>
        </div>
    </div>
);

const navItems = [
    {
        label: '交易',
        icon: <>
            <path d="M9 6.500A15 15 0 0 1 33 14c1.500 5 1 9-1 13M28 30A15 15 0 0 1 5 26C2 20 2 14 5 9M1 11l4-2 2 4M35 25l-3 3-3-4" />
            <path d="m13 10 5.500 7 5.500-7M18.500 17v10M12.500 17.500h12M12.500 22.500h12" />
        </>,
    },
    {
        label: '发帖',
        icon: <>
            <path d="M25 3H6a3 3 0 0 0-3 3v24a3 3 0 0 0 3 3h25a3 3 0 0 0 3-3V13" />
            <path d="M15 23 29 8M31 6l3-3" strokeWidth="4" />
        </>,
    },
    {
        label: '功能',
        icon: <>
            <rect x="4" y="4" width="12.500" height="12.500" rx="2.500" /><rect x="4" y="20.500" width="12.500" height="12.500" rx="2.500" /><rect x="20.500" y="20.500" width="12.500" height="12.500" rx="2.500" />
            <path d="m27 3.500 7 7-7 7-7-7z" strokeLinejoin="round" />
        </>,
    },
    {
        label: '设自选',
        icon: <>
            <circle cx="18" cy="18" r="15.800" />
            <path d="M10 18h3M16.500 18h3M23 18h3" strokeWidth="3" />
        </>,
    },
];

const BottomNav: React.FC = () => (
    <div className="flex h-[100px] shrink-0 border-t border-[#e2e4e8] bg-[#f6f7f9] text-[20px] text-[#555]">
        <div className="flex w-[160px] flex-col items-center pt-[5px]">
            <Caret className="h-[5px] w-3 rotate-180 fill-[#888]" />
            <span className="mt-[3px] text-[24px] leading-[28px] tracking-[-0.3px] text-[#4a9c2e]">3959.50</span>
            <div className="flex w-full justify-between pl-6 leading-[28px]">
                <span>上证</span>
                <span className="text-[23.500px] tracking-[-0.2px] text-[#4a9c2e]">-0.43%</span>
            </div>
        </div>
        {navItems.map((item) => (
            <div key={item.label} className="flex w-[140px] flex-col items-center pt-[5px]">
                <svg viewBox="0 0 37 36" className="h-9 w-[37px]" fill="none" stroke="#555" strokeWidth="1.700">{item.icon}</svg>
                <span className="mt-[7px] leading-[28px]">{item.label}</span>
            </div>
        ))}
    </div>
);

const App: React.FC = () => {
    return (
        <div className="relative flex h-[1600px] w-[720px] flex-col overflow-hidden bg-white font-['Roboto','Noto_Sans_CJK_SC',sans-serif]">
            <div className="flex min-h-0 flex-1 flex-col overflow-hidden">
                <div className="shrink-0">
                    <StatusBar />
                    <Header />
                    <Quote />
                    <Notice />
                    <PeriodTabs />
                    <MaRow />
                    <PriceChart />
                    <VolumeHeader />
                    <VolumeChart />
                    <IndicatorHeader
                        name="DMI"
                        chipClass="w-16"
                        values={[
                            { text: 'PDI:39.80', color: 'text-[#222]', width: 'w-[119px] mr-[12px]' },
                            { text: 'MDI:7.68', color: 'text-[#e6bd52]', width: 'w-[109px] mr-[10px]', down: true },
                            { text: 'ADX:64.80', color: 'text-[#bd3fcb]', width: 'w-[131px] mr-[11px]' },
                            { text: 'ADXR:40.44', color: 'text-[#4a9c2e]', width: 'w-[143px]' },
                        ]}
                    />
                    <DmiChart />
                    <IndicatorHeader
                        name="KDJ"
                        chipClass="w-[63px]"
                        values={[
                            { text: 'K:87.36', color: 'text-[#222]', width: 'w-[94px] mr-[11px]' },
                            { text: 'D:85.03', color: 'text-[#e6bd52]', width: 'w-[100px] mr-[12px]' },
                            { text: 'J:92.03', color: 'text-[#bd3fcb]', width: 'w-[94px]' },
                        ]}
                    />
                    <KdjChart />
                    <IndicatorHeader
                        name="MACD"
                        className="h-[35px]"
                        chipClass="w-[88px]"
                        values={[
                            { text: 'DIF:0.25', color: 'text-[#222]', width: 'w-[106px] mr-[10px]' },
                            { text: 'DEA:0.12', color: 'text-[#e6bd52]', width: 'w-[109px] mr-[11px]' },
                            { text: 'M:0.26', color: 'text-[#bd3fcb]', width: 'w-[89px]' },
                        ]}
                    />
                    <MacdChart />
                </div>
                <Banner />
                <SectionTabs />
                <Cards />
            </div>
            <BottomNav />
            {/* Page scroll thumb */}
            <div className="absolute top-[337px] left-[11px] h-[121px] w-[6px] rounded-full bg-black/20" />
        </div>
    );
};

export default App;
